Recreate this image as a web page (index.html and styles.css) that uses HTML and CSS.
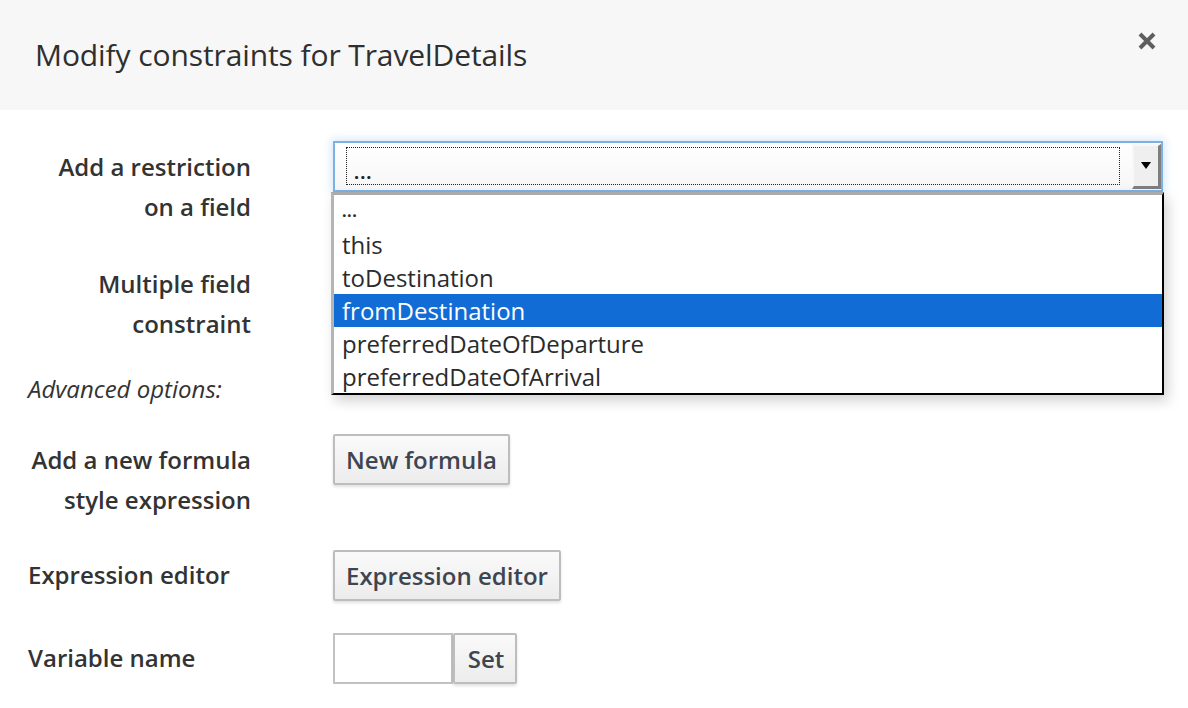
FILE: index.html
```html
<!DOCTYPE html>
<html>
<head>
<meta charset="utf-8">
<link rel="stylesheet" href="styles.css">
</head>
<body>
<div class="modal">
  <div class="modal-header">
    <h1 class="title">Modify constraints for TravelDetails</h1>
    <span class="close"><svg width="18" height="18" viewBox="0 0 18 18"><path d="M2 2 L16 16 M16 2 L2 16" stroke="#5e5e5e" stroke-width="4"/></svg></span>
  </div>
  <div class="modal-body">
    <div class="row row-1">
      <div class="label right pt6">Add a restriction<br>on a field</div>
      <div class="control">
        <div class="select">
          <div class="select-face"><span class="focus-ring"><span class="sel-text">...</span></span></div>
          <div class="select-arrow"><span class="tri"></span></div>
          <ul class="dropdown">
            <li class="opt small">...</li>
            <li class="opt">this</li>
            <li class="opt">toDestination</li>
            <li class="opt active">fromDestination</li>
            <li class="opt">preferredDateOfDeparture</li>
            <li class="opt">preferredDateOfArrival</li>
          </ul>
        </div>
      </div>
    </div>
    <div class="row row-2">
      <div class="label right">Multiple field<br>constraint</div>
      <div class="control"></div>
    </div>
    <div class="row row-3">
      <div class="label italic">Advanced options:</div>
    </div>
    <div class="row row-4">
      <div class="label right pt6">Add a new formula<br>style expression</div>
      <div class="control"><button class="btn">New formula</button></div>
    </div>
    <div class="row row-5">
      <div class="label pt5">Expression editor</div>
      <div class="control"><button class="btn">Expression editor</button></div>
    </div>
    <div class="row row-6">
      <div class="label pt5">Variable name</div>
      <div class="control inline"><input class="text-input" type="text"><button class="btn btn-set">Set</button></div>
    </div>
  </div>
</div>
</body>
</html>
```

FILE: styles.css
```css
html, body {
  margin: 0;
  padding: 0;
  background: #ffffff;
}
body {
  font-family: "Open Sans", "DejaVu Sans", sans-serif;
  color: #363636;
  width: 1188px;
  height: 708px;
  overflow: hidden;
}
.modal-header {
  height: 110px;
  background: #f7f7f7;
  display: flex;
  align-items: flex-start;
  justify-content: space-between;
  box-sizing: border-box;
  padding: 0 32px 0 35px;
}
.title {
  margin: 0;
  padding-top: 34px;
  font-size: 30px;
  font-weight: 400;
  line-height: 42px;
  color: #2f2f2f;
  letter-spacing: -0.1px;
}
.close {
  display: block;
  margin-top: 32px;
  width: 18px;
  height: 18px;
}
.close svg { display: block; }
.modal-body {
  padding-top: 31px;
}
.row {
  display: flex;
  align-items: flex-start;
}
.label {
  width: 223px;
  padding-left: 28px;
  font-size: 24px;
  font-weight: 600;
  line-height: 40px;
  color: #333;
  flex: none;
  white-space: nowrap;
}
.label.right { text-align: right; }
.label.italic {
  font-style: italic;
  font-weight: 400;
  font-size: 24px;
  color: #333;
}
.pt6 { padding-top: 6px; }
.pt5 { padding-top: 5px; }
.control {
  margin-left: 82px;
  flex: none;
}
.control.inline { display: flex; }
.row-2 { margin-top: 37px; }
.row-3 { margin-top: 25px; }
.row-4 { margin-top: 25px; }
.row-5 { margin-top: 30px; }
.row-6 { margin-top: 32px; }

/* select */
.select {
  position: relative;
  width: 830px;
  height: 51px;
  box-sizing: border-box;
  border: 2px solid #7cb1e2;
  box-shadow: 0 0 8px 2px rgba(140, 190, 240, 0.35);
  background: linear-gradient(#ffffff, #f6f6f6);
  display: flex;
}
.select-face {
  flex: 1;
  padding: 4px 12px 4px 11px;
}
.focus-ring {
  display: block;
  height: 38px;
  border: 1px dotted #222;
  box-sizing: border-box;
  position: relative;
}
.sel-text {
  position: absolute;
  left: 7px;
  bottom: 2px;
  font-size: 18px;
  line-height: 20px;
  font-weight: 700;
  letter-spacing: 1px;
  color: #222;
}
.select-arrow {
  width: 29px;
  height: 45px;
  margin: 1px 0 0 0;
  box-sizing: border-box;
  background: #efefef;
  border-top: 2px solid #f7f7f7;
  border-left: 2px solid #f7f7f7;
  border-right: 3px solid #7e7e7e;
  border-bottom: 3px solid #7e7e7e;
  display: flex;
  align-items: flex-start;
  justify-content: center;
  padding-top: 16px;
}
.tri {
  display: block;
  width: 0;
  height: 0;
  border-left: 5px solid transparent;
  border-right: 5px solid transparent;
  border-top: 7px solid #000;
}
.dropdown {
  position: absolute;
  left: -4px;
  top: 49px;
  width: 833px;
  margin: 0;
  padding: 0;
  list-style: none;
  background: #fff;
  box-sizing: border-box;
  border-top: 3px solid #aaaaaa;
  border-left: 3px solid #b4b4b4;
  border-right: 2px solid #000;
  border-bottom: 2px solid #000;
  box-shadow: 4px 6px 12px rgba(0, 0, 0, 0.18);
  z-index: 5;
}
.opt {
  height: 33px;
  line-height: 33px;
  padding-left: 8px;
  font-size: 24px;
  color: #2b2b2b;
  white-space: nowrap;
}
.opt.small {
  font-size: 16px;
  font-weight: 700;
  letter-spacing: 0.5px;
}
.opt.active {
  background: #116cd6;
  color: #fff;
}

/* buttons */
.btn {
  font-family: "Open Sans", "DejaVu Sans", sans-serif;
  font-size: 24px;
  font-weight: 600;
  color: #3f4550;
  height: 51px;
  padding: 0 11px;
  box-sizing: border-box;
  border: 2px solid #bdbdbd;
  border-radius: 2px;
  background: linear-gradient(#fafafa, #ececec);
  box-shadow: 0 2px 3px rgba(0, 0, 0, 0.12);
  margin: 0;
  white-space: nowrap;
}
.text-input {
  width: 120px;
  height: 51px;
  box-sizing: border-box;
  border: 2px solid #c2c2c2;
  margin: 0;
  padding: 0;
  background: #fff;
}
.btn-set {
  width: 64px;
  padding: 0 0 0 2px;
  margin-left: 0;
}
```
